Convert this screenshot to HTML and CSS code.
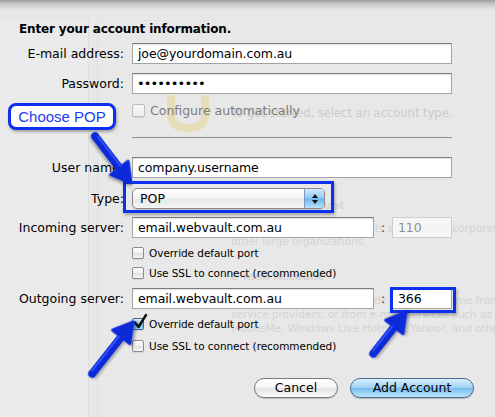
FILE: index.html
```html
<!DOCTYPE html>
<html>
<head>
<meta charset="utf-8">
<link rel="stylesheet" href="styles.css">
</head>
<body>
<div class="backdrop">
  <div class="bd-top"></div>
  <div class="bd-body">
    <div class="bd-side"></div>
    <div class="bd-main">
      <div class="g-welcome">
        <svg class="g-icon" width="48" height="39" viewBox="0 0 48 39"><path d="M7 2 V22 Q7 35 24 35 Q41 35 41 22 V2" fill="none" stroke="#e7ddb6" stroke-width="8"/></svg>
        <span class="g-text">To get started, select an account type.</span>
      </div>
      <div class="g-title g-t1">Exchange Account</div>
      <div class="g-desc g-d1">
        <div>Microsoft Exchange accounts are used by corporations and</div>
        <div>other large organizations.</div>
      </div>
      <div class="g-title g-t2">E-mail Account</div>
      <div class="g-desc g-d2">
        <div>POP or IMAP accounts include ones that come from Internet</div>
        <div>service providers, or from e-mail services such as</div>
        <div>MobileMe, Windows Live Hotmail, Yahoo!, and others.</div>
      </div>
    </div>
  </div>
</div>

<main class="form">
  <h1 class="title">Enter your account information.</h1>
  <div class="row r-email"><span class="lbl">E-mail address:</span><div class="input wide">joe@yourdomain.com.au</div></div>
  <div class="row r-pass"><span class="lbl">Password:</span><div class="input wide dots">••••••••••</div></div>
  <div class="row r-auto"><span class="lbl"></span><span class="cb cb-dis"></span><span class="cbtext-dis">Configure automatically</span></div>
  <div class="row r-sep"><span class="lbl"></span><div class="sep"></div></div>
  <div class="row r-user"><span class="lbl">User name:</span><div class="input wide">company.username</div></div>
  <div class="row r-type"><span class="lbl">Type:</span>
    <div class="popup hl-type"><span class="pval">POP</span><span class="step"><span class="up"></span><span class="down"></span></span></div>
  </div>
  <div class="row r-in"><span class="lbl">Incoming server:</span><div class="input server">email.webvault.com.au</div><span class="colon">:</span><div class="input port port-dis">110</div></div>
  <div class="row r-cb1"><span class="lbl"></span><span class="cb"></span><span class="cbtext">Override default port</span></div>
  <div class="row r-cb2"><span class="lbl"></span><span class="cb"></span><span class="cbtext">Use SSL to connect (recommended)</span></div>
  <div class="row r-out"><span class="lbl">Outgoing server:</span><div class="input server">email.webvault.com.au</div><span class="colon">:</span><div class="input port hl-port">366</div></div>
  <div class="row r-cb3"><span class="lbl"></span><span class="cb cb-on"><svg class="tick" width="16" height="17" viewBox="0 0 16 17"><path d="M3 9.5 L6.5 14 L14 2" fill="none" stroke="#111" stroke-width="2.4" stroke-linecap="round" stroke-linejoin="round"/></svg></span><span class="cbtext">Override default port</span></div>
  <div class="row r-cb4"><span class="lbl"></span><span class="cb"></span><span class="cbtext">Use SSL to connect (recommended)</span></div>
  <div class="buttons">
    <button class="btn btn-cancel">Cancel</button>
    <button class="btn btn-add">Add Account</button>
  </div>
</main>

<div class="callout">Choose POP</div>

<svg class="arrows" width="495" height="417" viewBox="0 0 495 417">
  <defs>
    <filter id="sh" x="-50%" y="-50%" width="200%" height="200%">
      <feDropShadow dx="1" dy="2" stdDeviation="1.5" flood-color="#000" flood-opacity="0.35"/>
    </filter>
  </defs>
  <g filter="url(#sh)" transform="translate(131 183) rotate(52.5)">
    <path d="M-59 0 L-14 0" stroke="#0b2bd9" stroke-width="8" stroke-linecap="round"/>
    <path d="M0 0 L-19 -11 L-19 11 Z" fill="#0b2bd9" stroke="#0b2bd9" stroke-width="3" stroke-linejoin="round"/>
    <path d="M-57 -2 L-20 -2" stroke="#3d5cff" stroke-width="1.5" stroke-linecap="round"/>
  </g>
  <g filter="url(#sh)" transform="translate(133 322) rotate(-51.7)">
    <path d="M-66 0 L-14 0" stroke="#0b2bd9" stroke-width="8" stroke-linecap="round"/>
    <path d="M0 0 L-19 -11 L-19 11 Z" fill="#0b2bd9" stroke="#0b2bd9" stroke-width="3" stroke-linejoin="round"/>
    <path d="M-64 -2 L-20 -2" stroke="#3d5cff" stroke-width="1.5" stroke-linecap="round"/>
  </g>
  <g filter="url(#sh)" transform="translate(406 312) rotate(-51.8)">
    <path d="M-53 0 L-14 0" stroke="#0b2bd9" stroke-width="8" stroke-linecap="round"/>
    <path d="M0 0 L-19 -11 L-19 11 Z" fill="#0b2bd9" stroke="#0b2bd9" stroke-width="3" stroke-linejoin="round"/>
    <path d="M-51 -2 L-20 -2" stroke="#3d5cff" stroke-width="1.5" stroke-linecap="round"/>
  </g>
</svg>
</body>
</html>
```

FILE: styles.css
```css
* { box-sizing: border-box; }
html, body { margin: 0; padding: 0; }
body {
  width: 495px;
  height: 417px;
  overflow: hidden;
  position: relative;
  background: #e8e8e8;
  font-family: "DejaVu Sans", "Lucida Grande", sans-serif;
  color: #000;
}

/* ---------- window behind the sheet ---------- */
.backdrop {
  position: absolute;
  inset: 0;
  z-index: 0;
  display: flex;
  flex-direction: column;
  overflow: hidden;
}
.bd-top {
  flex: none;
  height: 12px;
  background: linear-gradient(#9e9e9e, #c9c9c9 4px, #e2e2e2 9px, #e8e8e8);
}
.bd-body {
  flex: 1;
  display: flex;
  margin-top: 8px;
  min-width: 0;
}
.bd-side {
  flex: none;
  width: 89px;
  background: #eaeaea;
  border-right: 1px solid #dedede;
}
.bd-main {
  flex: 1;
  min-width: 0;
  margin-left: 8px;
  border-left: 1px solid #e0e0e0;
  border-top: 1px solid #e2e2e2;
  color: #d3d3d3;
  font-size: 10.5px;
  white-space: nowrap;
}
.g-welcome {
  display: flex;
  align-items: center;
  margin-top: 72px;
  height: 39px;
}
.g-icon { margin-left: 66px; flex: none; width: 48px; height: 39px; }
.g-text { margin-left: 19px; color: #cbcbcb; font-size: 11.5px; flex: none; }
.g-title {
  font-weight: bold;
  font-size: 11px;
  line-height: 16px;
  padding-left: 133px;
  color: #d6d6d6;
}
.g-t1 { margin-top: 66px; }
.g-t2 { margin-top: 21px; }
.g-desc { padding-left: 133px; }
.g-d1 { margin-top: 8px; line-height: 13px; }
.g-d2 { margin-top: 8px; line-height: 14px; }

/* ---------- sheet form ---------- */
.form {
  position: relative;
  z-index: 1;
  padding-top: 21px;
  display: flex;
  flex-direction: column;
}
.title {
  margin: 0;
  padding-left: 19px;
  font-size: 12px;
  line-height: 16px;
  font-weight: bold;
  letter-spacing: -0.15px;
}
.row {
  display: flex;
  align-items: center;
  height: 21px;
}
.lbl {
  flex: none;
  width: 124px;
  margin-right: 8px;
  text-align: right;
  font-size: 12.5px;
  white-space: nowrap;
}
.r-email { margin-top: 6px; }
.r-pass { margin-top: 9px; }
.r-auto { margin-top: 9px; height: 14px; }
.r-sep { margin-top: 20px; height: 1px; }
.r-user { margin-top: 19px; }
.r-type { margin-top: 10px; }
.r-in { margin-top: 8px; }
.r-cb1 { margin-top: 9px; height: 12px; }
.r-cb2 { margin-top: 8px; height: 12px; }
.r-out { margin-top: 9px; }
.r-cb3 { margin-top: 9px; height: 12px; }
.r-cb4 { margin-top: 10px; height: 12px; }

.input {
  height: 21px;
  background: #fff;
  border: 1px solid #a3a3a3;
  border-top-color: #7c7c7c;
  box-shadow: inset 0 1px 1px rgba(0,0,0,0.12);
  padding-left: 5px;
  font-size: 12.5px;
  letter-spacing: -0.1px;
  line-height: 19px;
  white-space: nowrap;
  overflow: hidden;
}
.wide { width: 320px; }
.server { width: 242px; }
.colon {
  width: 18px;
  text-align: center;
  font-size: 12.5px;
  color: #444;
}
.port { width: 60px; }
.port-dis {
  background: #f5f5f5;
  border-color: #cdcdcd;
  box-shadow: none;
  color: #8f8f8f;
  padding-left: 5px;
}
.dots {
  font-size: 13px;
  letter-spacing: -0.9px;
  padding-left: 4px;
}
.sep {
  width: 320px;
  height: 1px;
  background: #8e8e8e;
}

/* checkboxes */
.cb {
  flex: none;
  position: relative;
  width: 12px;
  height: 12px;
  border: 1px solid #8a8a8a;
  border-radius: 2px;
  background: linear-gradient(#ffffff, #eeeeee 50%, #e0e0e0 51%, #f7f7f7);
  box-shadow: 0 1px 0 rgba(0,0,0,0.08);
  margin-right: 5px;
}
.cb-dis {
  width: 13px;
  height: 13px;
  border-color: #bdbdbd;
  background: linear-gradient(#f7f7f7, #ececec);
}
.cb-on {
  border-color: #4a6b98;
  background: linear-gradient(#d7eefd, #8ec6ee 45%, #62aee8 55%, #a7d9fa);
}
.tick {
  position: absolute;
  left: -1px;
  top: -6px;
}
.cbtext {
  font-size: 10.5px;
  letter-spacing: -0.05px;
  white-space: nowrap;
}
.cbtext-dis {
  font-size: 12.5px;
  color: #7d7d7d;
  white-space: nowrap;
}

/* popup */
.popup {
  position: relative;
  width: 193px;
  height: 21px;
  display: flex;
  align-items: stretch;
  border: 1px solid #8a8a8a;
  border-radius: 5px;
  background: linear-gradient(#ffffff, #f3f3f3 50%, #e6e6e6 52%, #f6f6f6);
  box-shadow: 0 1px 1px rgba(0,0,0,0.15);
}
.pval {
  flex: 1;
  padding-left: 7px;
  font-size: 12.5px;
  line-height: 19px;
}
.step {
  width: 20px;
  border-left: 1px solid #7c9cc2;
  border-radius: 0 4px 4px 0;
  background: linear-gradient(#d3eafc, #93caf1 48%, #6cb4eb 52%, #b9e2fb);
  display: flex;
  flex-direction: column;
  align-items: center;
  justify-content: center;
  gap: 2px;
}
.up, .down {
  width: 0;
  height: 0;
  border-left: 3px solid transparent;
  border-right: 3px solid transparent;
}
.up { border-bottom: 4px solid #111; }
.down { border-top: 4px solid #111; }

/* annotation highlights */
.hl-type::after {
  content: "";
  position: absolute;
  left: -10px;
  right: -10px;
  top: -8px;
  bottom: -5px;
  border: 3px solid #0d2ff0;
  box-shadow: 1px 2px 3px rgba(0,0,0,0.3);
  pointer-events: none;
}
.hl-port {
  position: relative;
  overflow: visible;
}
.hl-port::after {
  content: "";
  position: absolute;
  left: -3px;
  right: -5px;
  top: -2px;
  bottom: -5px;
  border: 3px solid #0d2ff0;
  box-shadow: 1px 2px 3px rgba(0,0,0,0.3);
}

/* buttons */
.buttons {
  display: flex;
  justify-content: flex-end;
  gap: 12px;
  padding-right: 21px;
  margin-top: 26px;
}
.btn {
  height: 20px;
  border-radius: 10px;
  font-family: "DejaVu Sans", sans-serif;
  font-size: 12.5px;
  line-height: 18px;
  padding: 0;
  color: #000;
  box-shadow: 0 1px 1px rgba(0,0,0,0.2);
}
.btn-cancel {
  width: 84px;
  border: 1px solid #7a7a7a;
  background: linear-gradient(#ffffff, #f4f4f4 50%, #e4e4e4 52%, #fafafa);
}
.btn-add {
  width: 124px;
  border: 1px solid #4d6b92;
  background: linear-gradient(#d9effd, #9fd2f5 48%, #76bdee 52%, #bde6fc);
}

/* callout */
.callout {
  position: absolute;
  left: 8px;
  top: 103px;
  width: 108px;
  height: 27px;
  z-index: 3;
  background: #fff;
  border: 3px solid #0d2ff0;
  border-radius: 8px;
  box-shadow: 1px 2px 3px rgba(0,0,0,0.3);
  font-family: "Liberation Sans", Arial, sans-serif;
  font-size: 15px;
  line-height: 21px;
  color: #1d3cf2;
  text-align: center;
}

.arrows {
  position: absolute;
  left: 0;
  top: 0;
  z-index: 4;
  pointer-events: none;
}
```
